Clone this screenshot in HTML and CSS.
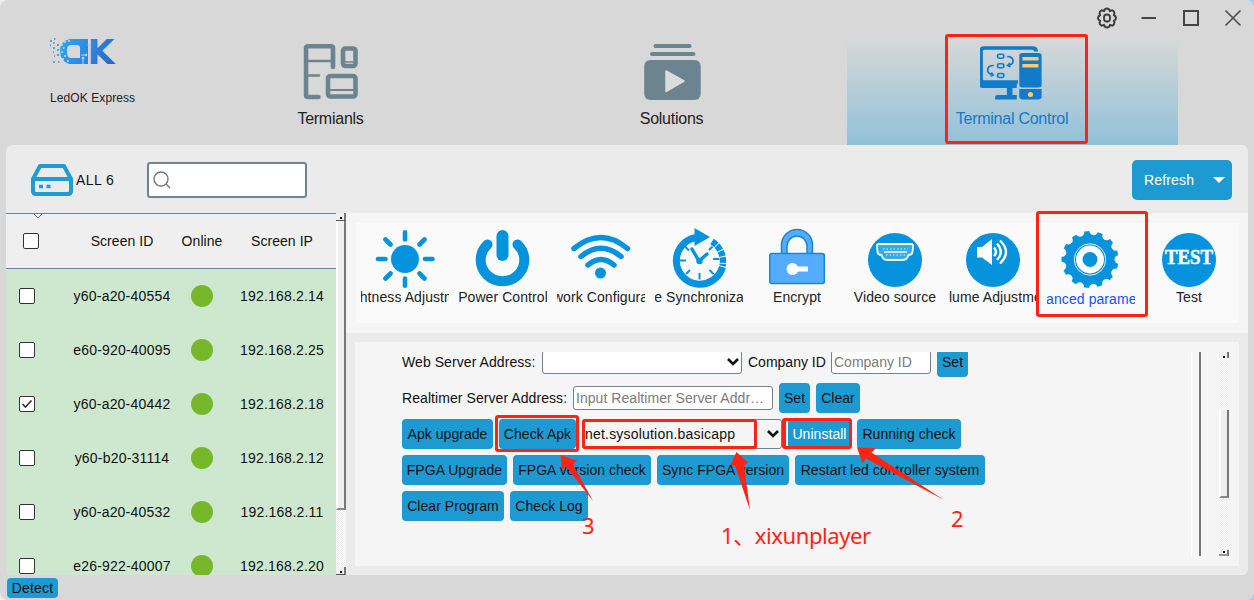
FILE: index.html
```html
<!DOCTYPE html>
<html lang="en">
<head>
<meta charset="utf-8">
<title>LedOK Express</title>
<link rel="stylesheet" href="styles.css">
</head>
<body>
<div class="window">
  <div class="titlebar">
    <svg width="22" height="22" viewBox="0 0 22 22" fill="none" stroke="#3c3c3c"><path d="M9 2.2 Q11 .8 13 2.2 L14 4 L16.4 3.4 Q18.6 4.4 18.4 6.6 L18 8.2 Q20 9 20 11 Q20 13 18 13.8 L18.4 15.4 Q18.6 17.6 16.4 18.6 L14 18 L13 19.8 Q11 21.2 9 19.8 L8 18 L5.6 18.6 Q3.4 17.6 3.6 15.4 L4 13.8 Q2 13 2 11 Q2 9 4 8.2 L3.6 6.6 Q3.4 4.4 5.6 3.4 L8 4 Z" stroke-width="2"/><rect x="8" y="7.500" width="6" height="7" rx="2.800" stroke-width="1.800"/></svg>
    <svg width="16" height="22" viewBox="0 0 16 22"><path d="M.5 11H15" stroke="#444" stroke-width="2"/></svg>
    <svg width="16" height="22" viewBox="0 0 16 22"><rect x="1" y="4" width="14" height="14" fill="none" stroke="#444" stroke-width="2"/></svg>
    <svg width="18" height="22" viewBox="0 0 18 22"><path d="M1.500 3.500L16.500 18.500M16.500 3.500L1.500 18.500" stroke="#505050" stroke-width="1.700"/></svg>
  </div>
  <div class="nav">
    <div class="brand">
      <svg width="68" height="30" viewBox="0 0 68 30">
        <defs><linearGradient id="lg" gradientUnits="userSpaceOnUse" x1="10" y1="0" x2="64" y2="26"><stop offset="0" stop-color="#2ba9ef"/><stop offset=".55" stop-color="#2c86e0"/><stop offset="1" stop-color="#2a65c8"/></linearGradient></defs>
        <path fill="url(#lg)" fill-rule="evenodd" d="M20 1H38V26H19Q10 23 10 13Q10 3 20 1ZM21 7Q17 7 17 12V15Q17 20 21 20H30V10Q30 7 27 7Z"/>
        <text x="37.500" y="26" class="mark" textLength="27" lengthAdjust="spacingAndGlyphs" fill="url(#lg)">K</text>
        <path d="M31 17H36M33 26V20M39 7V25" stroke="#b9d3ee" stroke-width="1" fill="none"/>
        <g fill="#b9d3ee"><circle cx="36" cy="17" r="1.300"/><circle cx="33" cy="20" r="1.300"/><circle cx="39" cy="7" r="1.300"/></g>
        <path d="M11 7h2M14 4h2M13 10h1.500M11 14h2M14 18h2M12 21h2M17 23h2M18 3h2" stroke="#d8d8d8" stroke-width="1.300"/>
        <path d="M0 3h2M4 1h1.500M3 5h1.500M7 7h2M0 7.500h1M3 10h2M7 12h2M3 14h1M7 17h2M3 24h2M8 24h1.500M4 18h1" stroke="#318fdf" stroke-width="1.600"/>
      </svg>
      <span class="brand-name">LedOK Express</span>
    </div>
    <div class="tab">
      <svg width="56" height="58" viewBox="0 0 56 58" fill="none" stroke="#6b8490" stroke-linecap="round" stroke-linejoin="round"><path d="M30 24V5Q30 3.300 28 3.300H5Q3 3.300 3 5V52Q3 54 5 54H15.500" stroke-width="4.600"/><path d="M4 18H29M4 32.500H16" stroke-width="2.400"/><rect x="40" y="5.500" width="12.500" height="17.500" rx="2.500" stroke-width="4.600"/><path d="M41 19H50" stroke-width="1.500"/><rect x="25" y="33" width="27.500" height="20.500" rx="2.500" stroke-width="4.600"/><path d="M26 47H51" stroke-width="2"/></svg>
      <span>Termianls</span>
    </div>
    <div class="tab">
      <svg width="58" height="58" viewBox="0 0 58 58"><g fill="#6b8490"><rect x="10.500" y="1" width="38" height="4" rx="2"/><rect x="7" y="9" width="45.500" height="4" rx="2"/><rect x="1.200" y="17" width="56.500" height="40" rx="6"/></g><path d="M23 28L41 38L23 48.500Z" fill="#dadbdb" stroke="#dadbdb" stroke-width="1.500" stroke-linejoin="round"/></svg>
      <span>Solutions</span>
    </div>
    <div class="tab active">
      <svg width="64" height="58" viewBox="0 0 64 58"><g transform="matrix(1.24 0 0 1 -3.500 0)"><path d="M33.500 39H6Q3.500 39 3.500 36V8Q3.500 5 7 5H45Q48 5 48 8.500" fill="none" stroke="#117ac9" stroke-width="3.300"/><path d="M2 39H32.500V45H29V52H32.500V56.500H15V54Q15 52 17 52H24.500V45H5Q2 45 2 42Z" fill="#117ac9"/><g fill="#117ac9"><rect x="34.500" y="10" width="18" height="34.500" rx="2.500"/><path d="M34.500 46H52.500V53.500Q52.500 56.500 49.500 56.500H37.500Q34.500 56.500 34.500 53.500Z"/></g><path d="M37 14H50V17.500H37ZM37 21H50V24.500H37Z" fill="#ffca70"/><ellipse cx="43.500" cy="51.500" rx="2.100" ry="2.500" fill="#ffca70"/><g fill="none" stroke="#117ac9" stroke-width="1.400"><rect x="17" y="11.200" width="5" height="4" rx="1.400"/><rect x="17" y="20.800" width="5" height="4" rx="1.400"/><rect x="17" y="30.500" width="5" height="4" rx="1.400"/><path d="M24.500 13.500Q29.500 13.500 29.500 18Q29.500 22 25 22.500M27 20L25 22.500L27.500 24M14 22.500Q9 22.500 9 27Q9 31 13.500 32M11.500 33.500L13.500 32L12 29.500"/></g></g></svg>
      <span>Terminal Control</span>
    </div>
  </div>
  <div class="main">
    <div class="toolbar">
      <svg class="drive" width="42" height="32" viewBox="0 0 42 32" fill="none" stroke="#1f9bd6" stroke-width="4" stroke-linejoin="round"><path d="M2 15L9 2H33L40 15V27Q40 30 37 30H5Q2 30 2 27ZM2 15H40"/><path d="M8 22.500H12M15.500 22.500H19.500" stroke-width="3.500"/></svg>
      <span class="count">ALL 6</span>
      <div class="search"><svg width="20" height="20" viewBox="0 0 20 20" fill="none" stroke="#777" stroke-width="1.400"><circle cx="8" cy="9" r="7"/><path d="M13 14L17 18"/></svg></div>
      <div class="refresh"><span>Refresh</span><i class="caret"></i></div>
    </div>
    <div class="body">
      <div class="list">
        <div class="table">
          <div class="row head"><svg class="hint" width="10" height="5" viewBox="0 0 10 5" fill="none" stroke="#777"><path d="M1 0L5 4L9 0"/></svg><div class="check"></div><span>Screen ID</span><span>Online</span><span>Screen IP</span></div>
          <div class="row"><div class="check"></div><span>y60-a20-40554</span><i class="dot"></i><span>192.168.2.14</span></div>
          <div class="row"><div class="check"></div><span>e60-920-40095</span><i class="dot"></i><span>192.168.2.25</span></div>
          <div class="row"><div class="check"><svg width="14" height="14" viewBox="0 0 14 14" fill="none" stroke="#333" stroke-width="1.700"><path d="M2.500 7L5.500 10L11.500 3.500"/></svg></div><span>y60-a20-40442</span><i class="dot"></i><span>192.168.2.18</span></div>
          <div class="row"><div class="check"></div><span>y60-b20-31114</span><i class="dot"></i><span>192.168.2.12</span></div>
          <div class="row"><div class="check"></div><span>y60-a20-40532</span><i class="dot"></i><span>192.168.2.11</span></div>
          <div class="row"><div class="check"></div><span>e26-922-40007</span><i class="dot"></i><span>192.168.2.20</span></div>
        </div>
        <div class="scroll"><div class="sb-btn"><i></i></div><div class="sb-thumb"></div><div class="sb-track"></div><div class="sb-btn end"><i></i></div></div>
      </div>
      <div class="content">
        <div class="tools-band">
          <div class="tools">
            <div class="tool"><svg viewBox="0 0 60 60"><circle cx="30" cy="30" r="14" fill="#0693de"/><g stroke="#0693de" stroke-width="4.600" stroke-linecap="round"><path d="M30 3.200V10.500M30 49.500V56.800M3 30H10.500M50 30H57.500M10.500 10.500L15.500 15.500M49.500 10.500L44.500 15.500M10.500 49.500L15.500 44.500M49.500 49.500L44.500 44.500"/></g></svg><span>Brightness Adjustment</span></div>
            <div class="tool"><svg viewBox="0 0 60 60" fill="none" stroke="#0693de" stroke-linecap="round"><path d="M14.500 15.500A21.800 21.300 0 1 0 44.500 15.500" stroke-width="10"/><path d="M29.500 7V26" stroke-width="12"/></svg><span>Power Control</span></div>
            <div class="tool"><svg viewBox="0 0 60 60" fill="none" stroke="#0693de" stroke-width="5.500" stroke-linecap="round"><path d="M3 19.500Q30 -2.500 56.500 19.500M10 27.500Q30 11 50 27.500M17 36Q30 25 43 36"/><circle cx="29.500" cy="44" r="5.500" fill="#0693de" stroke="none"/></svg><span>Network Configuration</span></div>
            <div class="tool"><svg viewBox="0 0 60 60" fill="none" stroke="#0693de"><path d="M27 8.500A23.500 23.500 0 1 0 53.500 38" stroke-width="7"/><path d="M43 12.500A23.500 23.500 0 0 1 53.500 37" stroke-width="6.500" stroke-dasharray="5.500 1"/><path d="M25.500 -1L41 8L25.500 17Z" fill="#0693de" stroke="none"/><path d="M23 20L30 32L38 25" stroke-width="3.400" stroke-linecap="round"/><circle cx="30.500" cy="32" r="3.200" fill="#0693de" stroke="none"/><path d="M30.500 44V50.500M11 31.500H17M44 30H50M16 17.500L20 21.500M43.500 17.500L40 21M17 45L21 41M44.500 45L40.500 41" stroke-width="2"/></svg><span>Time Synchronization</span></div>
            <div class="tool"><svg viewBox="0 0 60 60" stroke="#1687d5" stroke-width="1.500"><path d="M14.500 25V16A15.500 15.500 0 0 1 45.500 16V25H40V17A10 10 0 0 0 20 17V25Z" fill="#55acff"/><rect x="2.800" y="24.500" width="54.500" height="30" rx="2" fill="#55acff"/><path d="M31 37.500H41V42.500H31A6 6 0 1 1 31 37.500Z" fill="#fff" stroke="none"/></svg><span>Encrypt</span></div>
            <div class="tool"><svg viewBox="0 0 60 60"><circle cx="30" cy="31" r="27" fill="#0693de"/><path d="M14 15H46Q48.500 15 48 18L47.500 23Q47 26 43.500 26Q42 31 38 31H22Q18 31 16.500 26Q13 26 12.500 23L12 18Q11.500 15 14 15Z" fill="#35aae8" stroke="#fff" stroke-width="1.800"/><path d="M19 23H42" stroke="#fff" stroke-width="1.500"/><path d="M18 20H43M21 26H40" stroke="#d5efff" stroke-width="1" stroke-dasharray="1.500 2"/></svg><span>Video source</span></div>
            <div class="tool"><svg viewBox="0 0 60 60"><circle cx="30" cy="31" r="27" fill="#0693de"/><path d="M14 18H19L29 10V36L19 28.500H14Z" fill="#fff"/><g fill="none" stroke="#fff" stroke-width="2.400"><path d="M31 18.500Q35 23 31 27M34 14.500Q41.500 23 34 31M37 11.500Q49 23 37 34.500"/></g></svg><span>Volume Adjustment</span></div>
            <div class="tool selected"><svg viewBox="0 0 60 60"><circle cx="29" cy="30.500" r="28.500" fill="#0693de"/><circle cx="29" cy="30.500" r="28.800" fill="none" stroke="#fafafa" stroke-width="8.500" stroke-linecap="round" stroke-dasharray="0.010 13.910"/><g fill="none" stroke="#fff"><circle cx="29" cy="30.500" r="15.700" stroke-width=".9"/><circle cx="29" cy="30.500" r="10.700" stroke-width="6.500"/></g></svg><span>Advanced parameters</span></div>
            <div class="tool"><svg viewBox="0 0 60 60"><circle cx="30" cy="31" r="27" fill="#0693de"/><text x="6" y="34.500" class="test" textLength="48" lengthAdjust="spacingAndGlyphs">TEST</text></svg><span>Test</span></div>
          </div>
        </div>
        <div class="panel">
          <div class="form">
            <div class="line"><label class="w134">Web Server Address:</label><div class="field select"><svg width="12" height="8" viewBox="0 0 12 8" fill="none" stroke="#111" stroke-width="2.600"><path d="M1 1L6 6L11 1"/></svg></div><label class="w77 plain">Company ID</label><div class="field company">Company ID</div><div class="btn w31">Set</div></div>
            <div class="line"><label class="w165">Realtimer Server Address:</label><div class="field realtimer">Input Realtimer Server Addr…</div><div class="btn w31">Set</div><div class="btn w44">Clear</div></div>
            <div class="line"><div class="btn w91">Apk upgrade</div><div class="btn w77">Check Apk</div><div class="field select apk"><span>net.sysolution.basicapp</span><svg width="12" height="8" viewBox="0 0 12 8" fill="none" stroke="#111" stroke-width="2.600"><path d="M1 1L6 6L11 1"/></svg></div><div class="btn uninstall">Uninstall</div><div class="btn w104">Running check</div></div>
            <div class="line"><div class="btn w105">FPGA Upgrade</div><div class="btn w138">FPGA version check</div><div class="btn w132">Sync FPGA version</div><div class="btn w190">Restart led controller system</div></div>
            <div class="line"><div class="btn w102">Clear Program</div><div class="btn w78">Check Log</div></div>
          </div>
          <div class="inner-scroll"></div>
          <div class="scroll outer"><div class="sb-btn"><i></i></div><div class="sb-track top"></div><div class="sb-thumb"></div><div class="sb-track"></div><div class="sb-btn end"><i></i></div></div>
        </div>
      </div>
    </div>
  </div>
  <div class="footer"><div class="btn detect">Detect</div></div>
</div>
<div class="marks">
  <div class="box box-tab"></div>
  <div class="box box-param"></div>
  <div class="box box-check"></div>
  <div class="box box-select"></div>
  <div class="box box-uninstall"></div>
  <svg class="arrows" width="1254" height="600" viewBox="0 0 1254 600" fill="#ff2314"><path d="M560.500 455L577 460.500L573 464.500L593 501L566.500 467L562 469.500Z"/><path d="M736.500 452L748 462.500L744 465.500L750 510L735 465.500L730.500 465Z"/><path d="M857 447.500L876 448L871.500 452.500L944 500L866 458.500L862.500 463Z"/></svg>
  <span class="note note1">1<span class="comma">、</span>xixunplayer</span>
  <span class="note note2">2</span>
  <span class="note note3">3</span>
</div>
</body>
</html>
```
FILE: styles.css
```css
* { box-sizing: border-box; }
body { margin: 0; width: 1254px; height: 600px; overflow: hidden; position: relative; background: linear-gradient(90deg, #eeeeee 50%, #9fd0f5 50%); font: 14px/18px "Liberation Sans", Arial, sans-serif; color: #111; }
svg { display: block; flex: none; }
.window { width: 1254px; height: 600px; background: #d8d8d8; border-radius: 8px; display: flex; flex-direction: column; }
.titlebar { height: 35px; display: flex; justify-content: flex-end; padding: 7px 12px 0 0; }
.titlebar svg + svg { margin-left: 23px; }
.titlebar svg + svg + svg { margin-left: 26px; }
.titlebar svg:last-child { margin-left: 25px; }
.nav { height: 110px; display: flex; gap: 10px; }
.brand { width: 155px; padding: 3px 0 0 50px; white-space: nowrap; }
.brand-name { display: block; margin-top: 21px; font-size: 12px; letter-spacing: .09px; color: #222; }
.mark { font: bold 34px "DejaVu Sans", sans-serif; }
.tab { width: 331px; display: flex; flex-direction: column; align-items: center; padding-top: 8px; font-size: 16px; letter-spacing: -.25px; color: #222; }
.tab span { margin-top: 9px; }
.tab.active { background: linear-gradient(#d8d8d8 2%, #91c1d7); color: #117ac9; }
.tab.active svg { margin-right: 2px; }
.tab.active span { margin-right: 1px; }
.main { height: 430px; margin: 0 6px; background: #ebebeb; border-radius: 6px; overflow: hidden; }
.toolbar { height: 68px; display: flex; align-items: center; padding: 2px 16px 0 25px; }
.count { width: 74px; font-size: 14px; padding-left: 3px; letter-spacing: .4px; }
.search { width: 160px; height: 36px; border: 2px solid #6b8490; border-radius: 3px; background: #fff; padding: 6px 4px; }
.refresh { margin-left: auto; width: 100px; height: 40px; background: #1e9ad3; border-radius: 5px; color: #fff; display: flex; align-items: center; padding-left: 12px; letter-spacing: .15px; }
.caret { margin-left: auto; margin-right: 7px; border: 6.5px solid transparent; border-top-color: #fff; border-bottom-width: 0; }
.body { display: flex; height: 362px; }
.list { width: 340px; display: flex; }
.table { width: 330px; height: 362px; overflow: hidden; border-top: 1px solid #6b8490; }
.row { height: 54px; display: grid; grid-template-columns: 76px 80px 80px 80px; align-items: center; justify-items: center; background: #cde8cf; letter-spacing: .2px; white-space: nowrap; }
.row .check { justify-self: start; margin-left: 13px; }
.row.head { height: 55px; background: #efefef; border-bottom: 1px solid #6b8490; position: relative; letter-spacing: .05px; }
.row.head .check { margin-left: 17px; }
.hint { position: absolute; left: 27px; top: 0; }
.check { width: 16px; height: 16px; border: 1px solid #333; border-radius: 2px; background: #fff; }
.dot { width: 22px; height: 22px; border-radius: 50%; background: #76b82a; }
.scroll { width: 10px; display: flex; flex-direction: column; background: #f5f5f5; }
.sb-btn { height: 8px; background: #f0f0f0; border-right: 2px solid #777; border-bottom: 1px solid #555; padding: 4px 0 0 4px; flex: none; }
.sb-btn i { display: block; width: 2px; height: 2px; background: #111; }
.sb-thumb { height: 289px; background: #efefef; border-left: 2px solid #fff; border-right: 2px solid #777; border-bottom: 2px solid #888; }
.sb-track { flex: 1; background: repeating-conic-gradient(#fff 0 25%, #ececec 0 50%) 0 0 / 2px 2px; }
.content { width: 902px; display: flex; flex-direction: column; }
.tools-band { height: 120px; background: #f5f5f5; padding: 10px; }
.tools { height: 100px; background: #fafafa; display: grid; grid-template-columns: repeat(9, 98px); }
.tool { padding: 6px 5px 0; display: flex; flex-direction: column; align-items: center; }
.tool svg { width: 60px; height: 60px; overflow: visible; }
.tool span { width: 88px; margin-top: -1px; display: flex; justify-content: center; overflow: hidden; white-space: nowrap; letter-spacing: .08px; color: #222; }
.tool.selected span { color: #1255f5; margin-top: 1px; }
.test { font: bold 20px "Liberation Serif", serif; fill: #fff; stroke: #fff; stroke-width: .5px; }
.panel { margin: 9px 9px 0; height: 224px; background: #f5f5f5; display: flex; padding: 10px 10px 10px 47px; }
.form { width: 788px; height: 204px; overflow: hidden; display: flex; flex-direction: column; gap: 6px; }
.line { display: flex; height: 30px; align-items: center; gap: 6px; white-space: nowrap; flex: none; letter-spacing: .07px; }
.line:first-child { margin-top: -5px; }
.plain { letter-spacing: 0; }
.btn { height: 30px; border-radius: 4px; background: #1e9ad3; display: flex; align-items: center; justify-content: center; letter-spacing: .04px; white-space: nowrap; }
.field { height: 24px; border: 1px solid #6b8490; border-radius: 3px; background: #fff; color: #7b7b7b; display: flex; align-items: center; padding-left: 2px; }
.select { width: 200px; justify-content: flex-end; padding-right: 2px; }
.company { width: 100px; letter-spacing: 0; }
.realtimer { width: 200px; letter-spacing: .05px; }
.apk { height: 30px; background: #f5f5f5; color: #111; justify-content: space-between; letter-spacing: .2px; }
.w31 { width: 31px; } .w44 { width: 44px; } .w77 { width: 77px; } .w78 { width: 78px; }
.w91 { width: 91px; } .w102 { width: 102px; } .w104 { width: 104px; } .w105 { width: 105px; }
.w132 { width: 132px; } .w134 { width: 134px; } .w138 { width: 138px; } .w165 { width: 165px; } .w190 { width: 190px; }
.uninstall { width: 63px; color: #fff; }
.inner-scroll { width: 10px; margin: 0 18px 0 1px; border-left: 1px solid #fff; border-right: 2px solid #777; }
.scroll.outer { width: 10px; }
.outer .sb-btn { height: 6px; border-bottom: 0; }
.outer .sb-btn.end { border-bottom: 2px solid #999; padding-top: 1px; }
.outer .sb-thumb { height: 88px; }
.outer .sb-track.top { flex: 0 0 52px; }
.footer { padding: 3px 0 0 7px; }
.detect { width: 51px; height: 20px; letter-spacing: .15px; }
.marks { position: absolute; left: 0; top: 0; color: #ff2314; }
.box { position: absolute; border: 3px solid #ff2314; border-radius: 3px; }
.box-tab { left: 945px; top: 34px; width: 143px; height: 110px; }
.box-param { left: 1036px; top: 211px; width: 112px; height: 106px; }
.box-check { left: 495px; top: 415px; width: 84px; height: 37px; }
.box-select { left: 582px; top: 419px; width: 175px; height: 30px; }
.box-uninstall { left: 782px; top: 418px; width: 70px; height: 31px; border-left-width: 4px; }
.arrows { position: absolute; left: 0; top: 0; }
.note { position: absolute; font: 22px/30px "Noto Sans", "Noto Sans CJK SC", sans-serif; white-space: nowrap; }
.comma { font-family: "Noto Sans CJK SC", sans-serif; }
.note1 { left: 721px; top: 519px; letter-spacing: -.4px; }
.note2 { left: 951px; top: 503px; }
.note3 { left: 582px; top: 510px; }
```
